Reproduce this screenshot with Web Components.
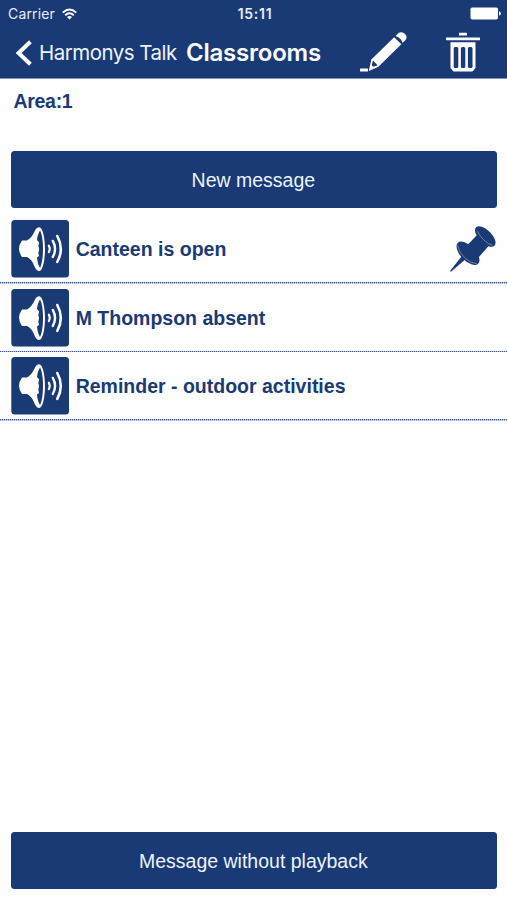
<!DOCTYPE html>
<html lang="en">
<head>
<meta charset="utf-8">
<title>Classrooms</title>
<style>
  body {
    margin: 0;
    background: #fefefe;
  }
</style>
</head>
<body>
<talk-screen>
  <status-bar slot="top"></status-bar>
  <nav-bar slot="top" back="Harmonys Talk">Classrooms</nav-bar>
  <area-label>Area:1</area-label>
  <action-button>New message</action-button>
  <message-list>
    <message-row pinned>Canteen is open</message-row>
    <message-row>M Thompson absent</message-row>
    <message-row>Reminder - outdoor activities</message-row>
  </message-list>
  <action-button slot="bottom">Message without playback</action-button>
</talk-screen>

<script>
// Attaches an open shadow root and fills it
class BaseElement extends HTMLElement {
  constructor() {
    super();
    this.attachShadow({ mode: 'open' }).innerHTML = this.render();
  }
}

// Whole screen: header, content, button at the bottom
class TalkScreen extends BaseElement {
  render() {
    return `
      <style>
        :host {
          --blue: #193a74;
          display: flex;
          flex-direction: column;
          height: 900px;
          overflow: hidden;
          color: var(--blue);
          font-family: 'Liberation Sans', Arial, sans-serif;
        }
        header {
          box-sizing: border-box;
          height: 79px;
          background: var(--blue);
          border-bottom: 1px solid #8795bb;
          color: #fff;
          font-family: Inter, sans-serif;
        }
        main {
          flex: 1;
        }
        footer {
          padding-bottom: 11px;
        }
      </style>
      <header><slot name="top"></slot></header>
      <main><slot></slot></main>
      <footer><slot name="bottom"></slot></footer>
    `;
  }
}

class StatusBar extends BaseElement {
  render() {
    return `
      <style>
        :host {
          display: grid;
          grid-template-columns: 1fr auto 1fr;
          align-items: center;
          height: 27px;
          padding: 0 6px 0 8px;
          font-size: 14px;
          color: #e6edfb;
        }
        .carrier {
          display: flex;
          align-items: center;
          gap: 7px;
          letter-spacing: 0.15px;
        }
        .time {
          font-weight: 600;
          font-size: 14px;
          letter-spacing: 0.7px;
          padding-left: 1px;
        }
        .battery {
          justify-self: end;
        }
        svg {
          display: block;
        }
      </style>
      <span class="carrier"><span>Carrier</span>
        <svg width="15" height="12" viewBox="0 0 15 12" fill="none" stroke="#fff" stroke-width="1.9">
          <path d="M0.8 4.6Q7.5 -1.6 14.2 4.6M3.2 7.2Q7.5 3.3 11.8 7.2"/>
          <path d="M7.5 11.6L5 9.1Q7.5 7 10 9.1Z" fill="#fff" stroke="none"/>
        </svg>
      </span>
      <span class="time">15:11</span>
      <svg class="battery" width="31" height="13" viewBox="0 0 31 13" fill="#fff">
        <rect x="0.5" y="0.5" width="27.5" height="12" rx="1.7"/>
        <path d="M29 4.3Q31 5 31 6.5T29 8.7Z"/>
      </svg>
    `;
  }
}

class NavBar extends BaseElement {
  render() {
    return `
      <style>
        :host {
          display: flex;
          align-items: center;
          height: 51px;
        }
        svg {
          display: block;
          flex: none;
        }
        .chevron {
          margin: 0 6px 0 15px;
        }
        .back {
          width: 147px;
          font-size: 20.5px;
          letter-spacing: -0.52px;
          white-space: nowrap;
          color: #edf3ff;
        }
        .title {
          width: 174px;
          font-size: 24px;
          font-weight: 600;
          letter-spacing: -0.22px;
          white-space: nowrap;
        }
        .pencil {
          margin-right: 38px;
        }
      </style>
      <svg class="chevron" width="18" height="28" viewBox="0 0 18 28" fill="none" stroke="#fff" stroke-width="4">
        <path d="M15.4 2.8L3.6 14L15.4 25.2"/>
      </svg>
      <span class="back">${this.getAttribute('back')}</span>
      <span class="title"><slot></slot></span>
      <svg class="pencil" width="48" height="42" viewBox="0 0 48 42" fill="#fff">
        <rect x="0" y="36.5" width="8" height="3" rx="0.5"/>
        <path d="M8.8 39L11.3 27.5L34.2 5.2L41.3 12.2L18.4 34.8Z"/>
        <path d="M13 28.6L17.6 33.2L13.4 34.8L11.8 33.2Z" fill="#193a74"/>
        <path d="M35.6 3.9L38.6 1Q41.2 -1 44.5 1.6Q48.3 4.8 45.3 8.2L42.5 11Q41.4 6 35.6 3.9Z"/>
      </svg>
      <svg width="34" height="42" viewBox="0 0 34 42" fill="#fff">
        <rect x="13" y="0.8" width="8" height="2.6" rx="0.5"/>
        <rect x="0" y="5.6" width="34" height="2.6" rx="0.5"/>
        <path d="M4.5 10.3H29.5V36L26.5 39.5H7.5L4.5 36Z"/>
        <g fill="#193a74">
          <rect x="7.7" y="15" width="4.6" height="21" rx="1.5"/>
          <rect x="14.9" y="15" width="4.4" height="21" rx="1.5"/>
          <rect x="21.9" y="15" width="4.6" height="21" rx="1.5"/>
        </g>
      </svg>
    `;
  }
}

class AreaLabel extends BaseElement {
  render() {
    return `
      <style>
        :host {
          display: block;
          height: 71.5px;
          padding-left: 13.5px;
          box-sizing: border-box;
          font-size: 19.5px;
          font-weight: bold;
          letter-spacing: -0.3px;
          line-height: 45px;
        }
      </style>
      <slot></slot>
    `;
  }
}

class ActionButton extends BaseElement {
  render() {
    return `
      <style>
        :host {
          display: block;
          padding: 0 10.5px 0 11.2px;
        }
        button {
          display: block;
          width: 100%;
          height: 57.5px;
          padding: 2px 1px 0 0;
          border: 0;
          border-radius: 3.5px;
          background: var(--blue);
          color: #edf3ff;
          font: 19.5px 'Liberation Sans', Arial, sans-serif;
        }
      </style>
      <button><slot></slot></button>
    `;
  }
}

class MessageList extends BaseElement {
  render() {
    return `
      <style>
        :host {
          display: block;
          padding-top: 7px;
        }
      </style>
      <slot></slot>
    `;
  }
}

// One message, with a pin on the right when it has the "pinned" attribute
class MessageRow extends BaseElement {
  render() {
    return `
      <style>
        :host {
          display: flex;
          align-items: center;
          box-sizing: border-box;
          height: 68.5px;
          padding: 0 10px 0 11px;
          background: repeating-linear-gradient(90deg, #3c598e 0 1px, #b3bfd5 1px 2px) bottom / 100% 1.5px no-repeat;
        }
        svg {
          display: block;
          flex: none;
        }
        .text {
          flex: 1;
          padding: 1px 0 0 6.7px;
          font-size: 19.5px;
          font-weight: bold;
          white-space: nowrap;
        }
        .pin {
          display: none;
        }
        :host([pinned]) .pin {
          display: block;
        }
      </style>
      <svg width="58" height="58" viewBox="0 0 58 58">
        <rect x="0.3" y="0" width="57.7" height="57.5" rx="3.5" fill="#193a74"/>
        <path fill="#fff" d="M11 20.5H16Q21 17.5 23.5 11.5Q25.5 7.3 28.2 7.3C31.5 7.3 34 17.5 34 29.2S31.5 51 28.2 51Q25.5 51 23.5 46.5Q21 39.5 16 37H11Q8 33 8 28.8T11 20.5Z"/>
        <path fill="#193a74" d="M29 10.5C31 14 32 21.5 32 29S31 44 29 48C27.3 45.5 26.3 41.5 26 37.5L28 36L27.3 32.5Q29 29.5 27.3 26L28.2 22.5L26 20C26.3 16.5 27.3 13.5 29 10.5Z"/>
        <g fill="none" stroke="#fff" stroke-linecap="round">
          <path stroke-width="2.1" d="M37.8 25.6Q39.8 28.9 37.8 32.2"/>
          <path stroke-width="2.4" d="M41.8 20.9Q46.3 28.9 41.8 36.9"/>
          <path stroke-width="2.6" d="M46.3 16Q53.3 28.9 46.3 41.8"/>
        </g>
      </svg>
      <span class="text"><slot></slot></span>
      <svg class="pin" width="48" height="48" viewBox="0 0 48 48" fill="#193a74">
        <path d="M14.5 29L18.5 32.5L2 46.8L1 46Z"/>
        <path d="M18 20.5L28.5 9.5L40 20.5L29.5 32.5Z"/>
        <ellipse cx="19" cy="28.3" rx="14.6" ry="7.4" transform="rotate(46 19 28.3)"/>
        <ellipse cx="36.3" cy="11.5" rx="13" ry="6.4" transform="rotate(45 36.3 11.5)"/>
        <g fill="none" stroke="#8c9fc6" stroke-width="0.7">
          <path d="M8.5 20.5Q10 28 16.5 33.5Q22 38.3 27.8 38.7"/>
          <path d="M28.3 5.8Q30.5 11 35 15.2Q39.5 19.3 43.5 20.3"/>
        </g>
      </svg>
    `;
  }
}

customElements.define('talk-screen', TalkScreen);
customElements.define('status-bar', StatusBar);
customElements.define('nav-bar', NavBar);
customElements.define('area-label', AreaLabel);
customElements.define('action-button', ActionButton);
customElements.define('message-list', MessageList);
customElements.define('message-row', MessageRow);
</script>
</body>
</html>
